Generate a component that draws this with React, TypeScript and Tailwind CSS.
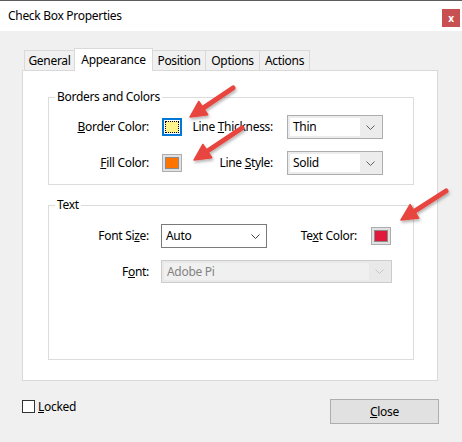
import React from 'react'

const font = { fontFamily: '"Noto Sans", "Open Sans", sans-serif' }

function Chevron({ color = '#606060' }: { color?: string }) {
  return (
    <svg width="9" height="5" viewBox="0 0 9 5" fill="none">
      <path d="M0.5 0.5 L4.5 4.5 L8.5 0.5" stroke={color} strokeWidth="1" />
    </svg>
  )
}

function Arrow({ x1, y1, x2, y2 }: { x1: number; y1: number; x2: number; y2: number }) {
  const dx = x2 - x1
  const dy = y2 - y1
  const len = Math.hypot(dx, dy)
  const ux = dx / len
  const uy = dy / len
  const nx = -uy
  const ny = ux
  const head = 16
  const half = 8
  const bx = x2 - ux * head
  const by = y2 - uy * head
  const pts = `${x2},${y2} ${bx + nx * half},${by + ny * half} ${bx - nx * half},${by - ny * half}`
  return (
    <g filter="url(#shadow)">
      <line x1={x1} y1={y1} x2={bx + ux * 2} y2={by + uy * 2} stroke="#e8453f" strokeWidth="5" strokeLinecap="round" />
      <polygon points={pts} fill="#e8453f" stroke="#e8453f" strokeWidth="1.5" strokeLinejoin="round" />
    </g>
  )
}

function Swatch({ color }: { color: string }) {
  return (
    <div className="w-[20px] h-[18px] border border-[#adadad] bg-[#e1e1e1] p-[2px]">
      <div className="w-full h-full border border-[#8a8a8a]" style={{ background: color }} />
    </div>
  )
}

function ComboBox({ value, width }: { value: string; width: string }) {
  return (
    <div className={`${width} h-[24px] border border-[#adadad] bg-[#ececec] flex p-[2px]`}>
      <div className="flex-1 bg-white flex items-center pl-[3px] text-black">{value}</div>
      <div className="w-[20px] flex items-center justify-center">
        <Chevron />
      </div>
    </div>
  )
}

export default function App() {
  return (
    <div className="w-[462px] h-[442px] bg-[#f0f0f0] relative overflow-hidden text-[12px] tracking-[-0.3px] text-black" style={font}>
      {/* Title bar */}
      <div className="h-[31px] bg-white border-t border-[#5c5c5c] flex items-start justify-between">
        <div className="pl-[8px] pt-[6px] leading-[18px]">Check Box Properties</div>
        <div className="mt-[8px] mr-[2px] w-[18px] h-[18px] bg-[#c85050] flex items-center justify-center text-white text-[10px] font-bold leading-none">
          x
        </div>
      </div>

      <div className="pt-[17px] pl-[22px]">
        {/* Tabs */}
        <div className="flex items-end h-[22px] ml-[2px]">
          <div className="w-[51px] h-[20px] border border-b-0 border-[#d9d9d9] flex items-center justify-center">General</div>
          <div className="relative z-10 -ml-px -mb-px w-[79px] h-[23px] border border-b-0 border-[#d9d9d9] bg-white flex items-start justify-center pt-[2px]">
            Appearance
          </div>
          <div className="-ml-px w-[54px] h-[20px] border border-b-0 border-[#d9d9d9] flex items-center justify-center">Position</div>
          <div className="-ml-px w-[55px] h-[20px] border border-b-0 border-[#d9d9d9] flex items-center justify-center">Options</div>
          <div className="-ml-px w-[51px] h-[20px] border border-b-0 border-[#d9d9d9] flex items-center justify-center">Actions</div>
        </div>

        {/* Panel */}
        <div className="w-[416px] h-[311px] border border-[#d9d9d9] bg-white pt-[18px] pl-[25px]">
          <fieldset className="w-[366px] border border-[#dcdcdc] pb-[9px]">
            <legend className="ml-[6px] px-[2px] leading-[16px]">Borders and Colors</legend>
            <div className="flex items-center h-[24px] mt-[10px]">
              <div className="w-[100px] text-right">
                <u>B</u>order Color:
              </div>
              <div className="ml-[13px] w-[20px] h-[18px] border-2 border-[#0078d7] bg-white p-px">
                <div className="w-full h-full border border-dotted border-black bg-[#fff38c]" />
              </div>
              <div className="w-[91px] text-right">
                Line <u>T</u>hickness:
              </div>
              <div className="ml-[14px]">
                <ComboBox value="Thin" width="w-[96px]" />
              </div>
            </div>
            <div className="flex items-center h-[24px] mt-[12px]">
              <div className="w-[100px] text-right">
                <u>F</u>ill Color:
              </div>
              <div className="ml-[13px]">
                <Swatch color="#ff7300" />
              </div>
              <div className="w-[91px] text-right">
                Line <u>S</u>tyle:
              </div>
              <div className="ml-[14px]">
                <ComboBox value="Solid" width="w-[96px]" />
              </div>
            </div>
          </fieldset>

          <fieldset className="w-[366px] mt-[12px] border border-[#dcdcdc] pb-[76px]">
            <legend className="ml-[6px] px-[2px] leading-[16px]">Text</legend>
            <div className="flex items-center h-[24px] mt-[11px]">
              <div className="w-[100px] text-right">
                Font Si<u>z</u>e:
              </div>
              <div className="ml-[12px] w-[106px] h-[24px] border border-[#7a7a7a] bg-white flex items-center justify-between pl-[4px] pr-[6px]">
                <span>Auto</span>
                <Chevron color="#404040" />
              </div>
              <div className="w-[90px] text-right">
                Te<u>x</u>t Color:
              </div>
              <div className="ml-[14px]">
                <Swatch color="#e2183b" />
              </div>
            </div>
            <div className="flex items-center h-[23px] mt-[12px]">
              <div className="w-[100px] text-right">
                F<u>o</u>nt:
              </div>
              <div className="ml-[12px] w-[231px] h-[23px] border border-[#cccccc] bg-[#e9e9e9] flex p-[2px]">
                <div className="flex-1 bg-[#f0f0f0] flex items-center pl-[3px] text-[#838383]">Adobe Pi</div>
                <div className="w-[20px] flex items-center justify-center">
                  <Chevron color="#c4c4c4" />
                </div>
              </div>
            </div>
          </fieldset>
        </div>

        {/* Bottom row */}
        <div className="w-[416px] flex items-start justify-between mt-[18px]">
          <div className="flex items-center gap-[3px] mt-[1px]">
            <div className="w-[13px] h-[13px] border border-[#333333] bg-white" />
            <span className="leading-[13px]">
              <u>L</u>ocked
            </span>
          </div>
          <div className="w-[109px] h-[25px] -mr-[1px] border border-[#adadad] bg-[#e1e1e1] flex items-center justify-center">
            <span>
              <u>C</u>lose
            </span>
          </div>
        </div>
      </div>

      {/* Annotation arrows */}
      <svg className="absolute inset-0 pointer-events-none" width="462" height="442">
        <defs>
          <filter id="shadow" x="-20%" y="-20%" width="140%" height="140%">
            <feDropShadow dx="1" dy="2" stdDeviation="1.5" floodColor="#000" floodOpacity="0.3" />
          </filter>
        </defs>
        <Arrow x1={233} y1={88} x2={190} y2={117} />
        <Arrow x1={242} y1={128} x2={194} y2={160} />
        <Arrow x1={446} y1={191} x2={401} y2={220} />
      </svg>
    </div>
  )
}
